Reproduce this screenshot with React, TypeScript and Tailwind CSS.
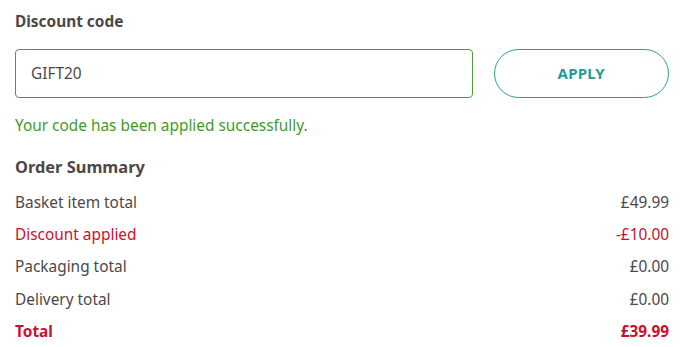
import React from "react";

const rows = [
  { label: "Basket item total", value: "£49.99", tone: "normal" },
  { label: "Discount applied", value: "-£10.00", tone: "discount" },
  { label: "Packaging total", value: "£0.00", tone: "normal" },
  { label: "Delivery total", value: "£0.00", tone: "normal" },
  { label: "Total", value: "£39.99", tone: "total" },
];

const App = () => {
  return (
    <div className="w-[684px] bg-white pl-[15px] pr-[15px] pt-[11px] font-['Noto_Sans',sans-serif] text-[#4d4843]">
      {/* DISCOUNT CODE */}
      <label className="block text-[15.4px] font-bold leading-[22px]">Discount code</label>
      <div className="mt-[16px] flex items-center gap-[21px]">
        <div className="flex h-[49px] w-[459px] items-center rounded-[4px] border border-[#4e9a3a] px-[15px] text-[15.4px] text-[#4d4843]">
          GIFT20
        </div>
        <button className="flex h-[49px] w-[176px] items-center justify-center rounded-full border border-[#2a9d9a] text-[15px] font-bold tracking-[0.2px] text-[#1f9d95]">
          APPLY
        </button>
      </div>
      <p className="mt-[17px] text-[15.4px] leading-[22px] text-[#3f9a2c]">
        Your code has been applied successfully.
      </p>

      {/* ORDER SUMMARY */}
      <h3 className="mt-[19px] text-[16.4px] font-bold leading-[22px]">Order Summary</h3>
      <div className="mt-[8px] flex flex-col">
        {rows.map((row) => (
          <div
            key={row.label}
            className={`flex h-[32.4px] items-center justify-between text-[15.4px] ${
              row.tone === "normal"
                ? "text-[#4d4843]"
                : row.tone === "discount"
                  ? "text-[#c8102e]"
                  : "font-bold text-[#c8102e]"
            }`}
          >
            <span>{row.label}</span>
            <span>{row.value}</span>
          </div>
        ))}
      </div>
    </div>
  );
};

export default App;
